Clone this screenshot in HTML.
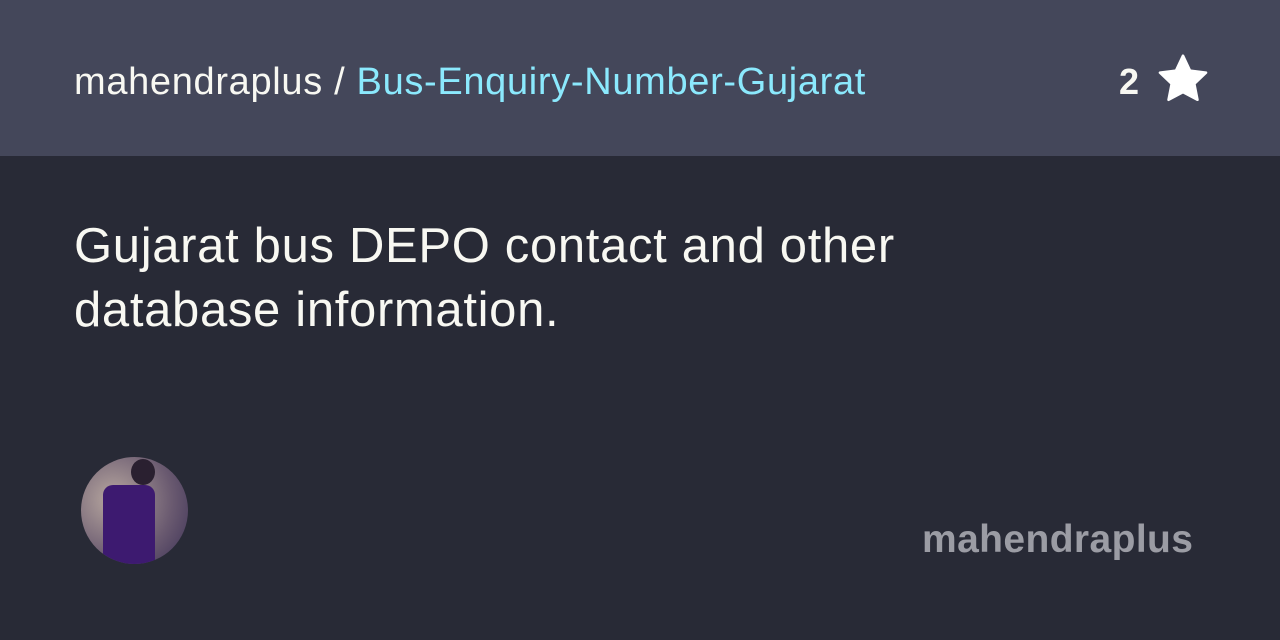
<!DOCTYPE html>
<html><head><style>
body{margin:0;width:1280px;height:640px;background:#282a36;font-family:"Liberation Sans",sans-serif;position:relative;overflow:hidden}
.top{position:absolute;left:0;top:0;width:1280px;height:156px;background:#44475a}
.repo{position:absolute;left:74px;top:61px;font-size:38px;color:#f8f8f2;white-space:nowrap;letter-spacing:0.67px}
.repo span{color:#8be9fd}
.cnt{position:absolute;left:1119px;top:61px;font-size:36px;font-weight:bold;color:#f8f8f2}
.desc{position:absolute;left:74px;top:214px;font-size:49px;line-height:64px;color:#f8f8f2;width:900px;letter-spacing:0.67px}
.av{position:absolute;left:81px;top:457px;width:107px;height:107px;border-radius:50%;overflow:hidden;background:radial-gradient(circle at 30% 40%,#b8a8a0,#6a5a70 60%,#3a2f55)}
.user{position:absolute;left:922px;top:518px;font-size:39px;font-weight:bold;color:#9b9ca4;letter-spacing:0.4px}
</style></head><body>
<div class="top"></div>
<div class="repo">mahendraplus / <span>Bus-Enquiry-Number-Gujarat</span></div>
<div class="cnt">2</div>
<svg style="position:absolute;left:1156px;top:53px" width="54" height="52" viewBox="0 0 24 23"><path d="M12 1.2l3.1 6.6 7.1.9-5.2 4.9 1.4 7.1L12 17.3l-6.4 3.4 1.4-7.1-5.2-4.9 7.1-.9z" fill="#fff" stroke="#fff" stroke-width="1.2" stroke-linejoin="round"/></svg>
<div class="desc">Gujarat bus DEPO contact and other database information.</div>
<div class="av"><div style="position:absolute;left:22px;top:28px;width:52px;height:80px;background:#3d1a70;border-radius:10px 10px 0 0"></div><div style="position:absolute;left:50px;top:2px;width:24px;height:26px;background:#2a2030;border-radius:50%"></div></div>
<div class="user">mahendraplus</div>
</body></html>
